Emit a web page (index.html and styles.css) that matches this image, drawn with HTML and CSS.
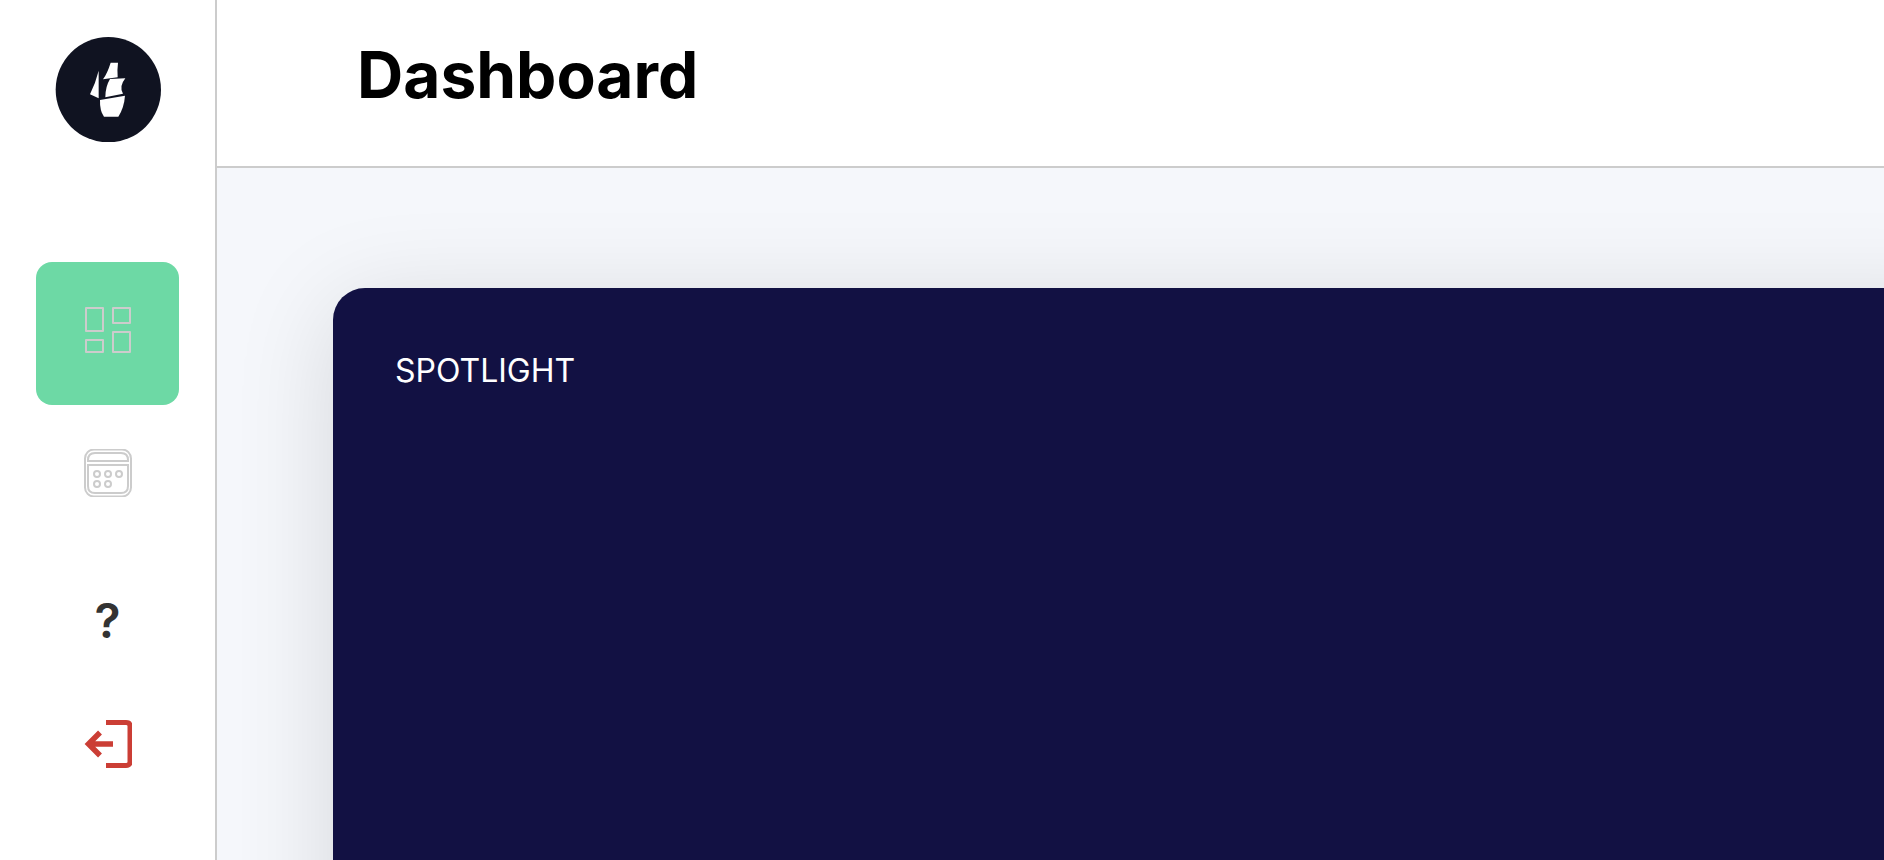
FILE: index.html
```html
<!DOCTYPE html>
<html lang="en">
<head>
<meta charset="utf-8">
<meta name="viewport" content="width=device-width, initial-scale=1">
<title>Dashboard</title>
<link rel="stylesheet" href="styles.css">
</head>
<body>
<div class="app">
  <aside class="sidebar">
    <a class="logo" href="#" aria-label="Home">
      <svg viewBox="0 0 318 318" aria-hidden="true">
        <circle cx="160" cy="161" r="158" fill="#101321"/>
        <g fill="#fff" transform="translate(87 60)">
          <path d="M80 20H102Q99 44 101 64L57 70Q70 52 80 20Z"/>
          <path d="M44 44V127L18 115Q35 80 44 44Z"/>
          <path d="M78 69L124 67Q104 92 117 113L64 124Q64 92 78 69Z"/>
          <path d="M48 132L123 119Q120 156 103 182H60Q47 165 48 132Z"/>
        </g>
      </svg>
    </a>
    <nav class="nav" aria-label="Main">
      <a class="nav-link nav-link-active" href="#" aria-label="Dashboard" aria-current="page">
        <svg class="icon" viewBox="0 0 48 48" fill="none" stroke="#ccc" stroke-width="2" stroke-linejoin="round" aria-hidden="true">
          <path d="M2 2H19V25H2ZM29 2H46V17H29ZM29 26H46V46H29ZM2 34H19V46H2Z"/>
        </svg>
      </a>
      <a class="nav-link" href="#" aria-label="Calendar">
        <svg class="icon" viewBox="0 0 48 48" fill="none" stroke="#ccc" stroke-width="2" aria-hidden="true">
          <rect x="1" y="0.500" width="46" height="47" rx="9"/>
          <path d="M4 12V11Q4 4 11 4H37Q44 4 44 11V12ZM4 16H44V37Q44 44 37 44H11Q4 44 4 37Z"/>
          <circle cx="13" cy="25" r="3"/>
          <circle cx="24" cy="25" r="3"/>
          <circle cx="35" cy="25" r="3"/>
          <circle cx="13" cy="35" r="3"/>
          <circle cx="24" cy="35" r="3"/>
        </svg>
      </a>
      <a class="nav-link nav-help" href="#" aria-label="Help">?</a>
      <button class="logout" type="button" aria-label="Log out">
        <svg class="icon" viewBox="0 0 48 48" fill="none" stroke="#cb3e35" aria-hidden="true">
          <path stroke-width="5" d="M22 2.500H42Q46 2.500 46 6V42Q46 45.500 42 45.500H22"/>
          <path stroke-width="5.500" d="M29 24H5M16 12.500L4.500 24L16 35.500"/>
        </svg>
      </button>
    </nav>
  </aside>
  <div class="page">
    <header class="header">
      <h1 class="title">Dashboard</h1>
    </header>
    <main class="content">
      <section class="card">
        <h2 class="card-label">SPOTLIGHT</h2>
      </section>
    </main>
  </div>
</div>
</body>
</html>
```
FILE: styles.css
```css
* {
  box-sizing: border-box;
}

body {
  margin: 0;
  font-family: Inter, sans-serif;
  color: #000;
  background: #fff;
}

.app {
  display: flex;
  height: 100vh;
  overflow: hidden;
}

.sidebar {
  display: flex;
  flex: none;
  flex-direction: column;
  align-items: center;
  padding: 36px;
  border-right: 2px solid #ccc;
}

.logo svg {
  display: block;
  width: 106px;
}

.nav {
  display: flex;
  flex-direction: column;
  align-items: center;
  margin-top: 120px;
}

.nav-link {
  display: flex;
  align-items: center;
  justify-content: center;
  width: 143px;
  height: 136px;
  text-decoration: none;
}

.nav-link-active {
  height: 143px;
  padding-bottom: 8px;
  border-radius: 16px;
  background: #6dd9a5;
}

.icon {
  display: block;
  width: 48px;
  height: 48px;
}

.nav-help {
  height: 158px;
  font-size: 48px;
  font-weight: 600;
  color: #333;
}

.logout {
  padding: 21px 20px;
  border: 0;
  background: none;
}

.page {
  display: flex;
  flex: 1;
  flex-direction: column;
  min-width: 0;
}

.header {
  padding: 36px 140px 52px;
  border-bottom: 2px solid #ccc;
}

.title {
  margin: 0;
  font-size: 64px;
  font-weight: 700;
  line-height: 78px;
}

.content {
  display: flex;
  flex: 1;
  overflow: hidden;
  padding: 120px 0 0 116px;
  background: #f5f7fb;
}

/* The card runs past the right and bottom edges of the view. */
.card {
  flex: 1;
  margin: 0 -120px -120px 0;
  padding: 63px 62px;
  border-radius: 32px;
  background: #121143;
  box-shadow: 0 16px 100px rgba(0, 0, 0, 0.13);
}

.card-label {
  margin: 0;
  font-size: 32px;
  font-weight: 400;
  line-height: 39px;
  color: #fff;
}
```
